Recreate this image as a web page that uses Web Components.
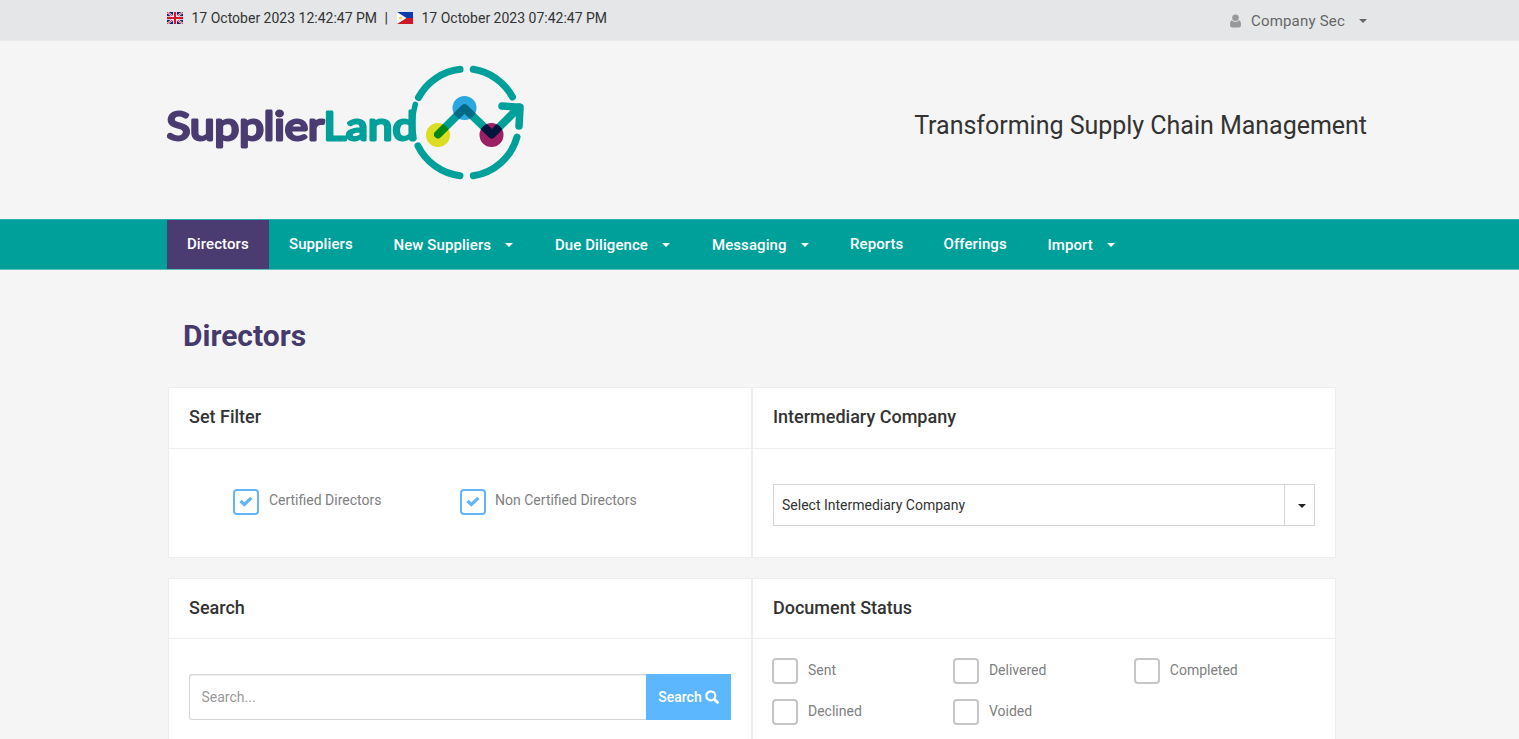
<!DOCTYPE html>
<html lang="en">
<head>
<meta charset="utf-8">
<title>SupplierLand - Directors</title>
<style>
html,body{margin:0;background:#f5f5f5;font-family:Roboto,"Liberation Sans",sans-serif;font-size:14px;color:#333;height:739px;overflow:hidden}
</style>
</head>
<body>
<supplier-app></supplier-app>
<script>
const define = (name, css, html) => customElements.define(name, class extends HTMLElement {
  constructor() {
    super();
    const markup = typeof html === 'function' ? html(this) : html;
    this.attachShadow({mode: 'open'}).innerHTML = `<style>*{box-sizing:border-box}${css}</style>${markup}`;
  }
});

define('flag-uk', ':host{display:block;width:16px;height:12px}svg{display:block}', `
<svg width="16" height="12" viewBox="0 0 16 12"><rect width="16" height="12" fill="#16236f"/>
<path d="M0 0l16 12M16 0L0 12" stroke="#fff" stroke-width="2"/><path d="M0 0l16 12M16 0L0 12" stroke="#d8142c" stroke-width=".9"/>
<path d="M8 0v12M0 6h16" stroke="#fff" stroke-width="3.600"/><path d="M8 0v12M0 6h16" stroke="#d8142c" stroke-width="2"/></svg>`);

define('flag-ph', ':host{display:block;width:16px;height:12px}svg{display:block}', `
<svg width="16" height="12" viewBox="0 0 16 12"><path fill="#0b3ba8" d="M0 0h16v6H0z"/><path fill="#ce1729" d="M0 6h16v6H0z"/><path fill="#fff" d="M0 0l9.500 6L0 12z"/><circle cx="3.500" cy="6" r="1.500" fill="#f3d350"/></svg>`);

define('caret-down', ':host{display:block;width:8px;height:4px}svg{display:block}',
  '<svg width="8" height="4" viewBox="0 0 8 4"><path d="M0 0h8L4 4z" fill="currentColor"/></svg>');

define('top-bar', `
:host{display:flex;justify-content:space-between;height:41px;background:#e5e6e8;border-bottom:1px solid #ebecee;padding:0 152px 0 167px}
.clock{display:flex;align-items:center;height:36px;font-size:14px;line-height:16px}
.date{width:185px;margin-left:8.500px;white-space:nowrap}.bar{width:20.500px;padding-left:8px;font-weight:500}
.user{display:flex;align-items:center;height:41px;font-size:15px;color:#666;letter-spacing:.2px}
.user svg{margin-right:10px}.user caret-down{margin-left:14px;margin-top:1px}`, `
<div class="clock"><flag-uk></flag-uk><span class="date">17 October 2023 12:42:47 PM</span><span class="bar">|</span><flag-ph></flag-ph><span class="date">17 October 2023 07:42:47 PM</span></div>
<div class="user"><svg width="11" height="14" viewBox="0 0 11 14"><path fill="#999" d="M2 6.300C.5 6.700 0 8.500 0 10.500C0 12.500.7 13.500 2 13.500h7c1.300 0 2-1 2-3 0-2-.5-3.800-2-4.200C8.200 7.200 7 7.900 5.500 7.900S2.800 7.200 2 6.300z"/><circle cx="5.500" cy="3.700" r="3.300" fill="#999"/></svg><span>Company Sec</span><caret-down></caret-down></div>`);

define('brand-logo', `
:host{display:block;width:360px;height:130px}svg{display:block;isolation:isolate}
text{font:400 39px Lato,sans-serif;stroke-width:2.900;stroke-linejoin:round;stroke-linecap:round}
.line{fill:none;stroke:#00a09a;stroke-linecap:round;stroke-linejoin:round}.mix{mix-blend-mode:multiply}`, `
<svg width="360" height="130" viewBox="167 55 360 130">
<text x="166.500" y="140" textLength="157.500" lengthAdjust="spacingAndGlyphs" fill="#4a3b70" stroke="#4a3b70">Supplier</text>
<text x="323.500" y="140" textLength="93.500" lengthAdjust="spacingAndGlyphs" fill="#00a09a" stroke="#00a09a">Land</text>
<g class="line" stroke-width="7">
<path d="M460 69.300A54 54 0 0 0 418.500 97.500"/><path d="M473.300 69.300A54 54 0 0 1 512.500 97"/>
<path d="M418 146A54 54 0 0 0 460 175.700"/><path d="M473.300 175.700A54 54 0 0 0 517 137"/>
<path stroke-width="5.500" d="M415.300 104.300Q410.500 121 414 138"/></g>
<circle cx="438" cy="135" r="12" fill="#dcdc22"/><circle cx="464.500" cy="108" r="12" fill="#29a7df"/><circle cx="491.500" cy="135" r="12" fill="#9c1f63"/>
<path class="line mix" stroke-width="8" d="M438 134.500L464.500 108.200L491.800 134.500L519 107.500"/>
<path class="line" stroke-width="7.500" d="M502 106L520 107.200L519 126"/>
</svg>`);

define('page-header', `
:host{display:flex;justify-content:space-between;height:178px;padding:14px 152px 0 167px}
.tag{font-size:25px;line-height:30px;margin-top:56px;letter-spacing:-.02px;color:#333}`,
`<brand-logo></brand-logo><div class="tag">Transforming Supply Chain Management</div>`);

define('nav-item', `
:host{display:flex;height:49px;padding:0 0 0 20px;color:#fff;font-size:15px;font-weight:500;line-height:49px;letter-spacing:.08px;white-space:nowrap}
:host([active]){background:#4a3b70}
:host([menu]){padding-top:1px}
caret-down{margin:22px 0 0 14px}`,
  el => `<slot></slot>${el.hasAttribute('menu') ? '<caret-down></caret-down>' : ''}`);

define('main-nav', `
:host{display:grid;grid-template-columns:102px 104.500px 161.500px 157px 138px 93.500px 104px 110px;height:51px;background:#00a09a;border-top:1px solid #2cb0ab;border-bottom:1px solid #5cc1bd;padding-left:167px}`, `
<nav-item active>Directors</nav-item><nav-item>Suppliers</nav-item><nav-item menu>New Suppliers</nav-item><nav-item menu>Due Diligence</nav-item><nav-item menu>Messaging</nav-item><nav-item>Reports</nav-item><nav-item>Offerings</nav-item><nav-item menu>Import</nav-item>`);

define('panel-card', `
:host{display:block;background:#fff;border:1px solid #eee;color:#333}
h2{margin:0;height:61px;border-bottom:1px solid #eee;padding:0 20px;font-size:18px;font-weight:500;line-height:58px}
:host([low]) h2{height:60px}`,
  el => `<h2>${el.getAttribute('heading')}</h2><slot></slot>`);

define('check-box', `
:host{display:flex;height:26px;color:#808080;font-size:14px}
.box{width:26px;height:26px;border:2px solid #c6c6c6;border-radius:4px;background:#fff;display:grid;place-items:center}
:host([checked]) .box{border-color:#62b5fb}
svg{display:none}:host([checked]) svg{display:block}
span{line-height:24px;margin-left:10px;white-space:nowrap}
:host([checked]) span{line-height:23px;margin-left:9.500px}`,
`<div class="box"><svg width="14" height="11" viewBox="0 0 14 11"><path d="M1.500 5L5.300 8.500L12.400 1.800" fill="none" stroke="#62b5fb" stroke-width="3.200"/></svg></div><span><slot></slot></span>`);

define('select-box', `
:host{display:flex;height:42px;border:1px solid #d5d5d5;background:#fff}
span{flex:1;line-height:40px;padding-left:8px}
i{width:30px;border-left:1px solid #d5d5d5;display:grid;place-items:center;padding:2px 0 0 5px;color:#222}`,
`<span><slot></slot></span><i><caret-down></caret-down></i>`);

define('search-box', `
:host{display:flex;height:46px}
input{flex:1;min-width:0;border:1px solid #d5d5d5;border-right:0;border-radius:3px 0 0 3px;padding:0 11.500px;font:14px Roboto,sans-serif;box-shadow:inset 0 1px 1px #eee}
input::placeholder{color:#999}
button{width:85px;border:0;padding:0;background:#5db7ff;color:#fff;font:500 14px Roboto,sans-serif;display:flex;align-items:center;justify-content:center;gap:3px}`,
`<input placeholder="Search..."><button>Search<svg width="14" height="14" viewBox="0 0 14 14" fill="none" stroke="#fff"><circle cx="5.800" cy="5.800" r="4.500" stroke-width="2.200"/><path d="M9.200 9.200l3.300 3.300" stroke-width="2.700" stroke-linecap="round"/></svg></button>`);

define('directors-page', `
:host{display:block;padding-left:168px}
h1{margin:0;padding:48px 0 0 15px;height:117px;font-size:30px;line-height:36px;font-weight:700;color:#463a6d}
.row{display:grid;grid-template-columns:584px 584px;height:171px;margin-bottom:20px}
.last{height:200px}
.filters{display:grid;grid-template-columns:226.200px 1fr;padding:39.500px 0 0 64.400px}
select-box{margin:35px 20px 0}search-box{margin:35px 20px 0}
.status{display:grid;grid-template-columns:180.900px 180.900px 1fr;row-gap:15px;padding:19px 0 0 19px}`, `
<h1>Directors</h1>
<div class="row"><panel-card heading="Set Filter"><div class="filters"><check-box checked>Certified Directors</check-box><check-box checked>Non Certified Directors</check-box></div></panel-card>
<panel-card heading="Intermediary Company"><select-box>Select Intermediary Company</select-box></panel-card></div>
<div class="row last"><panel-card low heading="Search"><search-box></search-box></panel-card>
<panel-card low heading="Document Status"><div class="status"><check-box>Sent</check-box><check-box>Delivered</check-box><check-box>Completed</check-box><check-box>Declined</check-box><check-box>Voided</check-box></div></panel-card></div>`);

define('supplier-app', ':host{display:block;width:1519px;height:739px;overflow:hidden}',
'<top-bar></top-bar><page-header></page-header><main-nav></main-nav><directors-page></directors-page>');
</script>
</body>
</html>
